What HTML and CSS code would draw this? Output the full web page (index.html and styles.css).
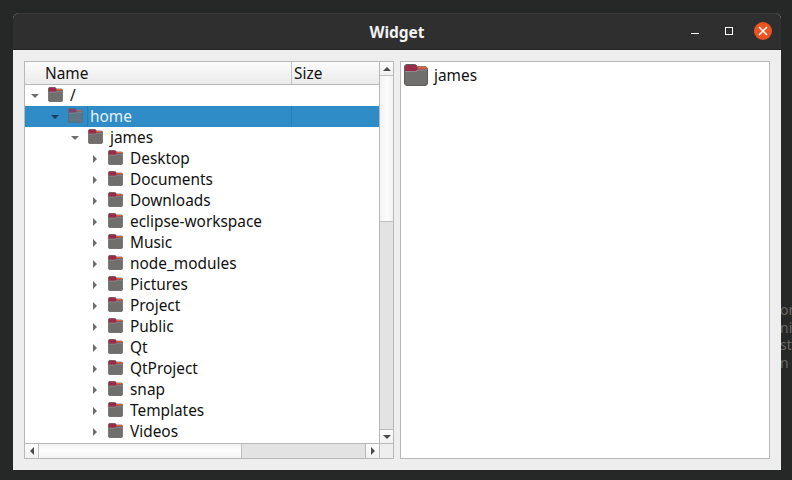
FILE: index.html
```html
<!DOCTYPE html>
<html lang="en">
<head>
<meta charset="utf-8">
<title>Widget</title>
<link rel="stylesheet" href="styles.css">
</head>
<body>
<svg class="defs" width="0" height="0" aria-hidden="true">
  <defs>
    <symbol id="folder" viewBox="0 0 24 22" preserveAspectRatio="none">
      <path d="M3 .5h7.500c1.200 0 1.800.6 2.500 1.500l.6.8H21c1.500 0 2.500 1 2.500 2.500V19c0 1.500-1 2.500-2.500 2.500H3C1.500 21.500.5 20.500.5 19V3C.5 1.500 1.500.5 3 .5z" fill="#716e6e" stroke="#5f5c5c"/>
      <path d="M3 1h7.500c1 0 1.500.5 2.200 1.500l1 1.500H23v1.500H13.500L12 7H1V3C1 2 2 1 3 1z" fill="#9c2b4a"/>
      <path d="M13 2.800h8c1.200 0 2.100.6 2.400 2H14z" fill="#d9673a"/>
      <path d="M1 7h11l1.500-1.500H23v1H13.900L12.400 8H1z" fill="#8d8b8b"/>
    </symbol>
  </defs>
</svg>
<div class="ghost"><span>or</span><span>ni</span><span>ste</span><span>n</span></div>
<main class="window">
  <header class="titlebar">
    <h1 class="title">Widget</h1>
    <div class="controls">
      <span class="min"></span>
      <span class="max"></span>
      <span class="close">
        <svg width="10" height="10" viewBox="0 0 10 10"><path d="M1 1l8 8M9 1l-8 8" stroke="#fff" stroke-width="1.500" fill="none"/></svg>
      </span>
    </div>
  </header>
  <div class="content">
    <section class="tree">
      <div class="tree-main">
        <div class="tree-view">
          <div class="head">
            <div class="head-name">Name</div>
            <div class="head-size">Size</div>
          </div>
          <div class="row l0"><i class="arrow down"></i><svg class="ico"><use href="#folder"/></svg><span>/</span></div>
          <div class="row l1 selected"><i class="arrow down"></i><svg class="ico"><use href="#folder"/></svg><span class="sel-name">home</span><b class="sel-size"></b></div>
          <div class="row l2"><i class="arrow down"></i><svg class="ico"><use href="#folder"/></svg><span>james</span></div>
          <div class="row l3"><i class="arrow right"></i><svg class="ico"><use href="#folder"/></svg><span>Desktop</span></div>
          <div class="row l3"><i class="arrow right"></i><svg class="ico"><use href="#folder"/></svg><span>Documents</span></div>
          <div class="row l3"><i class="arrow right"></i><svg class="ico"><use href="#folder"/></svg><span>Downloads</span></div>
          <div class="row l3"><i class="arrow right"></i><svg class="ico"><use href="#folder"/></svg><span>eclipse-workspace</span></div>
          <div class="row l3"><i class="arrow right"></i><svg class="ico"><use href="#folder"/></svg><span>Music</span></div>
          <div class="row l3"><i class="arrow right"></i><svg class="ico"><use href="#folder"/></svg><span>node_modules</span></div>
          <div class="row l3"><i class="arrow right"></i><svg class="ico"><use href="#folder"/></svg><span>Pictures</span></div>
          <div class="row l3"><i class="arrow right"></i><svg class="ico"><use href="#folder"/></svg><span>Project</span></div>
          <div class="row l3"><i class="arrow right"></i><svg class="ico"><use href="#folder"/></svg><span>Public</span></div>
          <div class="row l3"><i class="arrow right"></i><svg class="ico"><use href="#folder"/></svg><span>Qt</span></div>
          <div class="row l3"><i class="arrow right"></i><svg class="ico"><use href="#folder"/></svg><span>QtProject</span></div>
          <div class="row l3"><i class="arrow right"></i><svg class="ico"><use href="#folder"/></svg><span>snap</span></div>
          <div class="row l3"><i class="arrow right"></i><svg class="ico"><use href="#folder"/></svg><span>Templates</span></div>
          <div class="row l3"><i class="arrow right"></i><svg class="ico"><use href="#folder"/></svg><span>Videos</span></div>
        </div>
        <div class="vbar">
          <div class="sbtn vbtn"><i class="arrow up"></i></div>
          <div class="vthumb"></div>
          <div class="vtrack"></div>
          <div class="sbtn vbtn vbtn-end"><i class="arrow down dark"></i></div>
        </div>
      </div>
      <div class="hbar">
        <div class="sbtn hbtn"><i class="arrow left"></i></div>
        <div class="hthumb"></div>
        <div class="htrack"></div>
        <div class="sbtn hbtn hbtn-end"><i class="arrow right dark"></i></div>
        <div class="corner"></div>
      </div>
    </section>
    <section class="list">
      <div class="list-item"><svg class="ico-lg"><use href="#folder"/></svg><span>james</span></div>
    </section>
  </div>
</main>
</body>
</html>
```
FILE: styles.css
```css
* { box-sizing: border-box; }
html, body { margin: 0; height: 100%; }
body {
  width: 792px;
  height: 480px;
  overflow: hidden;
  background: #262727;
  padding: 13px 11px 10px 13px;
  font-family: "Noto Sans", "Open Sans", sans-serif;
  position: relative;
}
.defs { position: absolute; }
.ghost {
  position: absolute;
  left: 780px;
  top: 301px;
  display: flex;
  flex-direction: column;
  font-size: 14px;
  line-height: 17.500px;
  color: #666868;
  white-space: nowrap;
}
.window {
  width: 768px;
  height: 457px;
  display: flex;
  flex-direction: column;
  background: #eeeeee;
  border-radius: 6px 6px 0 0;
  overflow: hidden;
  position: relative;
  z-index: 1;
}
.titlebar {
  height: 37px;
  flex: none;
  background: #302f2f;
  border-top: 1px solid #3b3a3a;
  border-bottom: 1px solid #242323;
  display: flex;
  align-items: center;
  justify-content: center;
  position: relative;
}
.title {
  margin: 0;
  font-size: 15.500px;
  font-weight: 700;
  color: #f2f2f2;
}
.controls { position: absolute; inset: 0; }
.min, .max, .close { position: absolute; display: block; }
.min { left: 678px; top: 19px; width: 8px; height: 1px; background: #fff; }
.max { left: 712px; top: 13px; width: 8px; height: 8px; border: 1px solid #fff; }
.close {
  left: 741px;
  top: 8px;
  width: 18px;
  height: 18px;
  border-radius: 50%;
  background: #e95420;
  display: flex;
  align-items: center;
  justify-content: center;
}
.content {
  flex: 1;
  display: flex;
  gap: 6px;
  padding: 11px;
}
.tree {
  width: 370px;
  height: 398px;
  flex: none;
  border: 1px solid #b8b8b8;
  background: #fff;
  display: flex;
  flex-direction: column;
}
.tree-main { flex: 1; display: flex; min-height: 0; }
.tree-view { width: 354px; flex: none; overflow: hidden; }
.head {
  height: 23px;
  display: flex;
  background: linear-gradient(#fbfbfb, #ebebeb);
  border-bottom: 1px solid #b8b8b8;
  font-size: 15.400px;
  line-height: 22px;
  color: #111;
}
.head-name { width: 267px; padding: 1px 0 0 20px; border-right: 1px solid #c4c4c4; }
.head-size { flex: 1; padding: 1px 0 0 2px; }
.row {
  height: 21px;
  display: flex;
  align-items: center;
  font-size: 15.400px;
  line-height: 19px;
  color: #111;
  white-space: nowrap;
  position: relative;
}
.l0 { padding-left: 5px; }
.l1 { padding-left: 25px; }
.l2 { padding-left: 45px; }
.l3 { padding-left: 65px; }
.arrow {
  display: block;
  width: 0;
  height: 0;
  flex: none;
  border-style: solid;
  border-color: transparent;
}
.arrow.down { border-width: 4px 4px 0; border-top-color: #6e6e6e; margin: 0 6px 0 1px; }
.arrow.right { border-width: 4px 0 4px 4px; border-left-color: #6e6e6e; margin: 0 11px 0 3px; }
.arrow.up { border-width: 0 4px 4px; border-bottom-color: #4a4a4a; }
.arrow.left { border-width: 4px 4px 4px 0; border-right-color: #4a4a4a; }
.arrow.dark { margin: 0; }
.arrow.down.dark { border-top-color: #4a4a4a; }
.arrow.right.dark { border-left-color: #4a4a4a; }
.row .arrow.down { margin-right: 9px; }
.ico { width: 15px; height: 15px; flex: none; margin: 0 7px 2px 0; }
.selected { background: #308cc6; color: #e6f1f8; }
.selected .arrow.down { border-top-color: #1d3f5a; }
.selected .ico { opacity: .72; }
.row > .sel-name { height: 21px; line-height: 21px; border-left: 1px solid #2a7fb5; margin-left: -3px; padding-left: 2px; }
.sel-size {
  position: absolute;
  left: 266px;
  top: 0;
  width: 1px;
  height: 21px;
  background: #2a7fb5;
}
.vbar {
  flex: 1;
  display: flex;
  flex-direction: column;
  border-left: 1px solid #b8b8b8;
  background: #e3e3e3;
}
.sbtn {
  flex: none;
  display: flex;
  align-items: center;
  justify-content: center;
  background: linear-gradient(#fdfdfd, #f1f1f1);
}
.vbtn { height: 14px; border-bottom: 1px solid #c0c0c0; }
.vbtn-end { border-top: 1px solid #b8b8b8; border-bottom: 0; height: 14px; }
.vthumb {
  height: 146px;
  flex: none;
  background: linear-gradient(90deg, #f2f2f2, #fcfcfc 50%, #f2f2f2);
  border-bottom: 1px solid #c0c0c0;
}
.vtrack { flex: 1; }
.hbar {
  height: 15px;
  flex: none;
  display: flex;
  background: #e3e3e3;
  border-top: 1px solid #b8b8b8;
}
.hbtn { width: 14px; border-right: 1px solid #c0c0c0; }
.hbtn-end { border-right: 0; border-left: 1px solid #b8b8b8; width: 14px; }
.hthumb {
  width: 203px;
  flex: none;
  background: linear-gradient(#f2f2f2, #fcfcfc 50%, #f2f2f2);
  border-right: 1px solid #c0c0c0;
}
.htrack { flex: 1; }
.corner { width: 14px; flex: none; background: #eeeeee; border-left: 1px solid #b8b8b8; }
.list {
  width: 370px;
  height: 398px;
  flex: none;
  border: 1px solid #b8b8b8;
  background: #fff;
  padding: 2px 3px;
}
.list-item {
  display: flex;
  align-items: center;
  height: 22px;
  font-size: 15.400px;
  color: #111;
}
.ico-lg { width: 24px; height: 22px; flex: none; margin-right: 6px; }
```
